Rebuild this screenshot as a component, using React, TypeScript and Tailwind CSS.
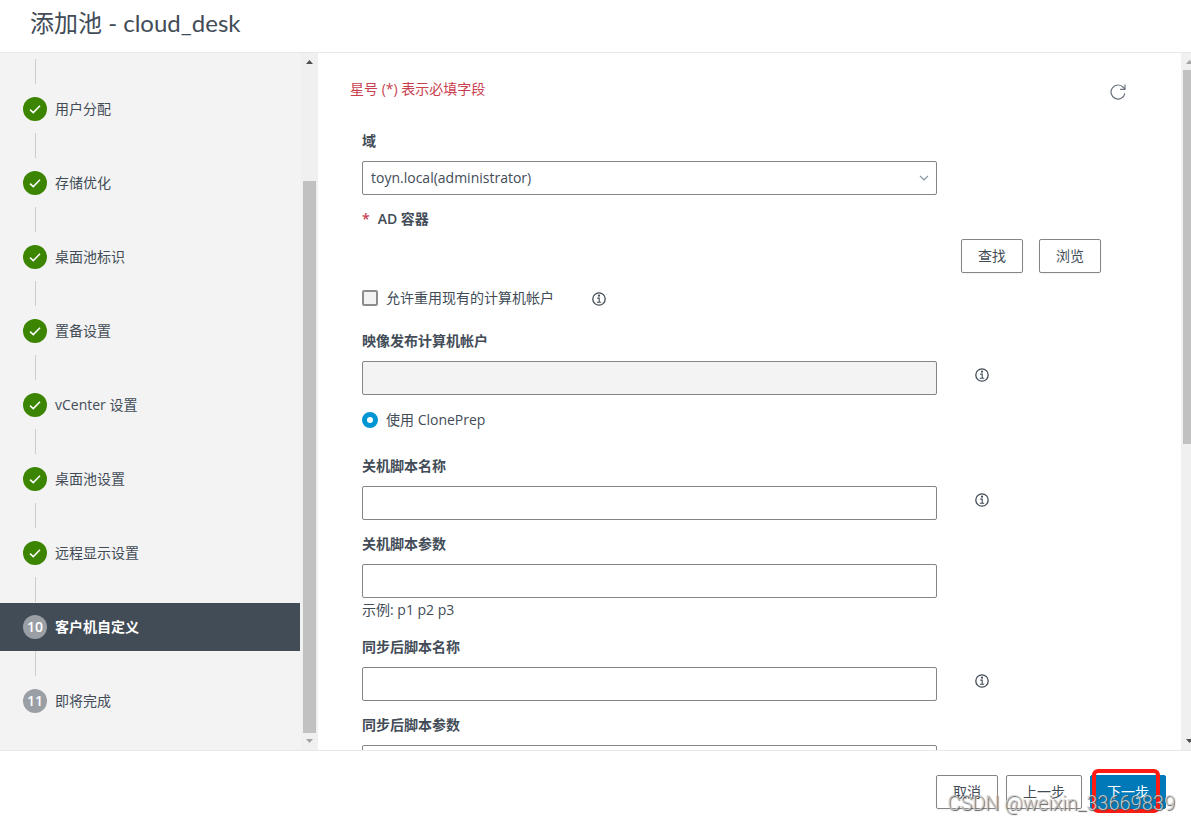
import React from "react";
import clsx from "clsx";

interface Step {
  number: number;
  title: string;
  state: "done" | "current" | "todo";
}

const STEPS: Step[] = [
  { number: 3, title: "用户分配", state: "done" },
  { number: 4, title: "存储优化", state: "done" },
  { number: 5, title: "桌面池标识", state: "done" },
  { number: 6, title: "置备设置", state: "done" },
  { number: 7, title: "vCenter 设置", state: "done" },
  { number: 8, title: "桌面池设置", state: "done" },
  { number: 9, title: "远程显示设置", state: "done" },
  { number: 10, title: "客户机自定义", state: "current" },
  { number: 11, title: "即将完成", state: "todo" },
];

const outlineButton =
  "h-[34px] px-4 border border-[#858585] rounded-xs bg-white text-sm text-[#424c57] shadow-xs cursor-pointer";

const inputStyle =
  "block h-[34px] w-full rounded-xs border border-[#858585] bg-white px-2 text-sm disabled:bg-[#f3f3f3]";

function InfoButton() {
  return (
    <button type="button" aria-label="信息" className="block h-4 w-3.5 cursor-pointer">
      <svg viewBox="0 0 14 14" className="h-3.5 w-3.5" fill="none" stroke="#424c57">
        <circle cx="7" cy="7" r="6.2" strokeWidth="1.3" />
        <path d="M5.2 6.100h2v4M4.800 10.300h4.400" strokeWidth="1.1" />
        <circle cx="7" cy="3.700" r="1.100" fill="#424c57" stroke="none" />
      </svg>
    </button>
  );
}

interface ScrollBarProps {
  before: number;
  thumb: number;
  after: number;
  atEnd?: boolean;
  className?: string;
}

function ScrollBar({ before, thumb, after, atEnd, className }: ScrollBarProps) {
  return (
    <div aria-hidden="true" className={clsx("shrink-0 overflow-hidden bg-[#f0f0f0]", className)}>
      <div className="flex h-full w-[17px] flex-col items-center">
        <svg viewBox="0 0 17 17" className="h-[17px] w-[17px] shrink-0">
          <path d="M5 11h7L8.500 7z" fill={atEnd ? "#505050" : "#a3a3a3"} />
        </svg>
        <div style={{ flexGrow: before }} />
        <div className="w-[13px] bg-[#c1c1c1]" style={{ flexGrow: thumb }} />
        <div style={{ flexGrow: after }} />
        <svg viewBox="0 0 17 17" className="h-[17px] w-[17px] shrink-0">
          <path d="M5 6h7L8.500 10z" fill={atEnd ? "#a3a3a3" : "#505050"} />
        </svg>
      </div>
    </div>
  );
}

function StepItem({ step }: { step: Step }) {
  const current = step.state === "current";
  return (
    <li>
      <div className="mb-px ml-[35px] h-[25px] w-px bg-[#cccccc]" />
      <button
        type="button"
        aria-current={current ? "step" : undefined}
        className={clsx(
          "flex h-12 w-full items-center gap-2 pl-[23px] text-left text-sm cursor-pointer",
          current ? "bg-[#424c57] font-bold text-white" : "text-[#424c57]"
        )}
      >
        <span
          className={clsx(
            "flex h-6 w-6 items-center justify-center rounded-full font-semibold text-white",
            step.state === "done" ? "bg-[#3c8500]" : "bg-[#9a9fa6]"
          )}
        >
          {step.state === "done" ? (
            <svg viewBox="0 0 12 12" className="h-3 w-3" fill="none" stroke="white" strokeWidth="1.5">
              <path d="M1 6.600L4.300 9.600L11 2.800" />
            </svg>
          ) : (
            step.number
          )}
        </span>
        {step.title}
      </button>
    </li>
  );
}

interface FieldProps {
  id: string;
  label: string;
  hint?: string;
  info?: boolean;
  disabled?: boolean;
}

function Field({ id, label, hint, info, disabled }: FieldProps) {
  return (
    <div>
      <label htmlFor={id} className="mb-2 block text-sm leading-6 font-semibold">
        {label}
      </label>
      <div className="grid grid-cols-[minmax(0,1fr)_220px] gap-6">
        <input id={id} type="text" disabled={disabled} className={inputStyle} />
        {info && (
          <div className="pt-1.5 pl-3.5">
            <InfoButton />
          </div>
        )}
      </div>
      {hint && <p className="mb-px text-sm leading-6">{hint}</p>}
    </div>
  );
}

function Sidebar() {
  return (
    <aside className="flex w-[318px] shrink-0 bg-[#f3f3f3]">
      <nav aria-label="步骤" className="flex-1 overflow-hidden pt-1.5">
        <ol>
          {STEPS.map((step) => (
            <StepItem key={step.number} step={step} />
          ))}
        </ol>
      </nav>
      <ScrollBar before={111} thumb={552} after={0} atEnd className="ml-px w-[17px]" />
    </aside>
  );
}

function CustomizationForm() {
  return (
    <form className="min-w-0 flex-1 overflow-hidden pt-6 text-[#424c57]">
      <div className="flex items-start justify-between pr-[55px] pl-8">
        <p className="text-sm leading-6 text-[#c93f50]">星号 (*) 表示必填字段</p>
        <button type="button" aria-label="刷新" className="mt-[7px] cursor-pointer">
          <svg viewBox="0 0 16 16" className="h-4 w-4" fill="none" stroke="#6b737d" strokeWidth="1.200">
            <path d="M14.900 9.400A7 7 0 1 1 13.400 3.500L15 5.200" />
            <path d="M15 .6v4.700h-4.900" />
          </svg>
        </button>
      </div>

      <div className="mt-7 flex flex-col gap-3 pl-11">
        <div>
          <label htmlFor="domain" className="mb-2 block text-sm leading-6 font-semibold">
            域
          </label>
          <div className="relative mr-[244px]">
            <select id="domain" className={clsx(inputStyle, "appearance-none")}>
              <option>toyn.local(administrator)</option>
            </select>
            <svg
              viewBox="0 0 10 6"
              className="pointer-events-none absolute top-3.5 right-2 h-1.5 w-2.5"
              fill="none"
              stroke="#8c9ba5"
              strokeWidth="1.200"
            >
              <path d="M1 1L5 4.800L9 1" />
            </svg>
          </div>
        </div>

        <div>
          <p className="mb-2 text-sm leading-6 font-semibold">
            <span className="mr-2 text-[#c93f50]">*</span>AD 容器
          </p>
          <div className="mb-px ml-auto flex w-[220px] gap-4">
            <button type="button" className={outlineButton}>查找</button>
            <button type="button" className={outlineButton}>浏览</button>
          </div>
        </div>

        <div className="mb-[7px] flex items-center">
          <label className="flex items-center gap-2 text-sm leading-6">
            <input
              type="checkbox"
              className="h-4 w-4 appearance-none rounded-xs border-2 border-[#8c8c8c] bg-[#f2f2f2]"
            />
            允许重用现有的计算机帐户
          </label>
          <div className="pt-0.5 pl-[38px]">
            <InfoButton />
          </div>
        </div>

        <Field id="publish-account" label="映像发布计算机帐户" info disabled />

        <label className="mt-px mb-2.5 flex items-center gap-2 text-sm leading-6">
          <input
            type="radio"
            name="customization"
            defaultChecked
            className="h-4 w-4 appearance-none rounded-full border-[5px] border-[#0095d3] bg-white"
          />
          使用 ClonePrep
        </label>

        <Field id="power-off-script" label="关机脚本名称" info />
        <Field id="power-off-params" label="关机脚本参数" hint="示例: p1 p2 p3" />
        <Field id="post-sync-script" label="同步后脚本名称" info />
        <Field id="post-sync-params" label="同步后脚本参数" />
      </div>
    </form>
  );
}

export default function App() {
  return (
    <div className="flex h-screen flex-col overflow-hidden bg-white font-['Open_Sans','Noto_Sans_CJK_SC',sans-serif] text-[#424c57]">
      <header className="flex h-[53px] shrink-0 items-center border-b border-[#e8e8e8] px-[30px] pb-1.5">
        <h1 className="font-['Lato','Noto_Sans_CJK_SC',sans-serif] text-2xl">添加池 - cloud_desk</h1>
      </header>

      <main className="flex min-h-0 flex-1">
        <Sidebar />
        <CustomizationForm />
        <ScrollBar before={0} thumb={374} after={289} className="w-2.5" />
      </main>

      <footer className="relative flex shrink-0 justify-end gap-2 border-t border-[#e8e8e8] pt-6 pr-[25px] pb-3">
        <button type="button" className={outlineButton}>取消</button>
        <button type="button" className={outlineButton}>上一步</button>
        <div className="relative">
          <button
            type="button"
            className="h-[34px] cursor-pointer rounded-xs border border-[#0079b8] bg-[#0079b8] px-4 text-sm text-white"
          >
            下一步
          </button>
          <div className="pointer-events-none absolute -top-1.5 right-1.5 -bottom-1 left-0.5 rounded-md border-4 border-[#ff1a12]" />
        </div>
        <span className="pointer-events-none absolute right-4 bottom-1 font-['Roboto',sans-serif] text-xl leading-7 font-light text-[#d0d0d0]/90 [text-shadow:1px_1px_1px_#555]">
          CSDN @weixin_33669839
        </span>
      </footer>
    </div>
  );
}
